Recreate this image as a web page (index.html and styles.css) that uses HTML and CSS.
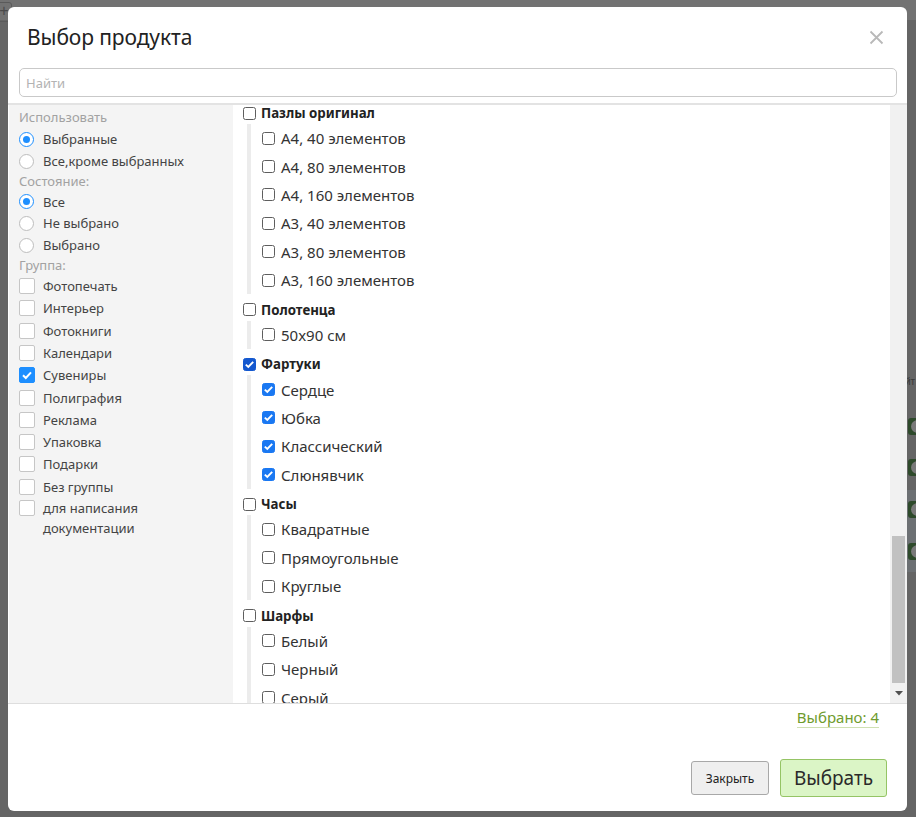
FILE: index.html
```html
<!DOCTYPE html>
<html lang="ru">
<head>
<meta charset="utf-8">
<title>Выбор продукта</title>
<link rel="stylesheet" href="styles.css">
</head>
<body>
<div class="backdrop">
  <div class="bg-top"></div>
  <div class="bg-plus">+</div>
  <div class="bg-band"></div>
  <div class="bg-pill p1"></div>
  <div class="bg-pill p2"></div>
  <div class="bg-pill p3"></div>
  <div class="bg-pill p4"></div>
  <div class="bg-txt">йт</div>
</div>

<div class="modal">
  <div class="modal-header">
    <h1 class="modal-title">Выбор продукта</h1>
    <span class="close">
      <svg width="15" height="15" viewBox="0 0 15 15"><path d="M1.5 1.5L13.5 13.5M13.5 1.5L1.5 13.5" stroke="#b9b9b9" stroke-width="1.8" fill="none"/></svg>
    </span>
  </div>
  <div class="search-wrap">
    <input class="search" type="text" placeholder="Найти">
  </div>

  <div class="modal-body">
    <div class="filters">
      <div class="f-head first">Использовать</div>
      <div class="f-item r"><span class="radio on"></span>Выбранные</div>
      <div class="f-item r"><span class="radio"></span>Все,кроме выбранных</div>
      <div class="f-head">Состояние:</div>
      <div class="f-item r"><span class="radio on"></span>Все</div>
      <div class="f-item r"><span class="radio"></span>Не выбрано</div>
      <div class="f-item r"><span class="radio"></span>Выбрано</div>
      <div class="f-head">Группа:</div>
      <div class="f-item"><span class="fcb"></span>Фотопечать</div>
      <div class="f-item"><span class="fcb"></span>Интерьер</div>
      <div class="f-item"><span class="fcb"></span>Фотокниги</div>
      <div class="f-item"><span class="fcb"></span>Календари</div>
      <div class="f-item"><span class="fcb on"><svg width="16" height="16" viewBox="0 0 16 16"><path d="M4 8.2L6.8 11L12 5.3" stroke="#fff" stroke-width="2" fill="none"/></svg></span>Сувениры</div>
      <div class="f-item"><span class="fcb"></span>Полиграфия</div>
      <div class="f-item"><span class="fcb"></span>Реклама</div>
      <div class="f-item"><span class="fcb"></span>Упаковка</div>
      <div class="f-item"><span class="fcb"></span>Подарки</div>
      <div class="f-item"><span class="fcb"></span>Без группы</div>
      <div class="f-item multi"><span class="fcb"></span><span>для написания<br>документации</span></div>
    </div>

    <div class="list">
      <div class="list-inner">
        <div class="grp"><span class="cb"></span>Пазлы оригинал</div>
        <div class="children">
          <div class="child"><span class="cb"></span>А4, 40 элементов</div>
          <div class="child"><span class="cb"></span>А4, 80 элементов</div>
          <div class="child"><span class="cb"></span>А4, 160 элементов</div>
          <div class="child"><span class="cb"></span>А3, 40 элементов</div>
          <div class="child"><span class="cb"></span>А3, 80 элементов</div>
          <div class="child"><span class="cb"></span>А3, 160 элементов</div>
        </div>
        <div class="grp"><span class="cb"></span>Полотенца</div>
        <div class="children">
          <div class="child"><span class="cb"></span>50x90 см</div>
        </div>
        <div class="grp"><span class="cb on dark"><svg width="13" height="13" viewBox="0 0 13 13"><path d="M2.8 6.6L5.3 9L10.2 3.8" stroke="#fff" stroke-width="1.9" fill="none"/></svg></span>Фартуки</div>
        <div class="children">
          <div class="child"><span class="cb on"><svg width="13" height="13" viewBox="0 0 13 13"><path d="M2.8 6.6L5.3 9L10.2 3.8" stroke="#fff" stroke-width="1.9" fill="none"/></svg></span>Сердце</div>
          <div class="child"><span class="cb on"><svg width="13" height="13" viewBox="0 0 13 13"><path d="M2.8 6.6L5.3 9L10.2 3.8" stroke="#fff" stroke-width="1.9" fill="none"/></svg></span>Юбка</div>
          <div class="child"><span class="cb on"><svg width="13" height="13" viewBox="0 0 13 13"><path d="M2.8 6.6L5.3 9L10.2 3.8" stroke="#fff" stroke-width="1.9" fill="none"/></svg></span>Классический</div>
          <div class="child"><span class="cb on"><svg width="13" height="13" viewBox="0 0 13 13"><path d="M2.8 6.6L5.3 9L10.2 3.8" stroke="#fff" stroke-width="1.9" fill="none"/></svg></span>Слюнявчик</div>
        </div>
        <div class="grp"><span class="cb"></span>Часы</div>
        <div class="children">
          <div class="child"><span class="cb"></span>Квадратные</div>
          <div class="child"><span class="cb"></span>Прямоугольные</div>
          <div class="child"><span class="cb"></span>Круглые</div>
        </div>
        <div class="grp"><span class="cb"></span>Шарфы</div>
        <div class="children">
          <div class="child"><span class="cb"></span>Белый</div>
          <div class="child"><span class="cb"></span>Черный</div>
          <div class="child"><span class="cb"></span>Серый</div>
        </div>
      </div>
    </div>

    <div class="scrollbar">
      <div class="sb-space"></div>
      <div class="sb-thumb"></div>
      <div class="sb-arrow">
        <svg width="8" height="5" viewBox="0 0 8 5"><path d="M0 0H8L4 4.5Z" fill="#505050"/></svg>
      </div>
    </div>
  </div>

  <div class="modal-footer">
    <div class="selected-row"><span class="selected">Выбрано: 4</span></div>
    <div class="buttons">
      <button class="btn btn-close">Закрыть</button>
      <button class="btn btn-ok">Выбрать</button>
    </div>
  </div>
</div>
</body>
</html>
```

FILE: styles.css
```css
html, body {
  margin: 0;
  padding: 0;
}
body {
  width: 916px;
  height: 817px;
  overflow: hidden;
  background: #656565;
  font-family: "Noto Sans", "Open Sans", sans-serif;
  position: relative;
}

/* dimmed page behind the modal */
.backdrop {
  position: absolute;
  inset: 0;
  z-index: 0;
}
.bg-top {
  position: absolute;
  left: 0; top: 0; right: 0;
  height: 20px;
  background: #727272;
}
.bg-plus {
  position: absolute;
  left: -4px; top: 2px;
  width: 14px; height: 18px;
  border: 1px solid #5a5a5a;
  border-radius: 3px;
  color: #4a4a4a;
  font: 16px/16px "Liberation Sans", sans-serif;
  text-align: center;
}
.bg-band {
  position: absolute;
  left: 907px; right: 0;
  top: 490px; height: 82px;
  background: #6c7073;
}
.bg-pill {
  position: absolute;
  left: 908px;
  width: 14px; height: 17px;
  background: #2e4a2b;
  border-radius: 3px;
}
.bg-pill::after {
  content: "";
  position: absolute;
  left: 3px; top: 2px;
  width: 13px; height: 13px;
  border-radius: 50%;
  background: #7a7a7a;
}
.p1 { top: 418px; }
.p2 { top: 459px; }
.p3 { top: 501px; }
.p4 { top: 543px; }
.bg-txt {
  position: absolute;
  left: 905px; top: 376px;
  font: 10px "Liberation Sans", sans-serif;
  color: #3a3a3a;
}

/* modal */
.modal {
  position: absolute;
  left: 8px; top: 7px;
  width: 899px;
  height: 804px;
  background: #fff;
  border-radius: 6px;
  z-index: 1;
  display: flex;
  flex-direction: column;
  overflow: hidden;
  color: #333;
}
.modal-header {
  height: 61px;
  display: flex;
  align-items: center;
  justify-content: space-between;
  padding: 0 23px 0 19px;
  flex: none;
}
.modal-title {
  margin: 0;
  font-weight: 400;
  font-size: 21px;
  color: #222;
  letter-spacing: -0.1px;
  position: relative;
  top: -1px;
}
.close {
  display: flex;
}
.search-wrap {
  padding: 0 10px 0 11px;
  flex: none;
}
.search {
  box-sizing: border-box;
  width: 100%;
  height: 29px;
  border: 1px solid #c9c9c9;
  border-radius: 5px;
  padding: 0 6px;
  font-family: inherit;
  font-size: 13px;
  color: #333;
  outline: none;
}
.search::placeholder {
  color: #b3b3b3;
}

.modal-body {
  margin-top: 6px;
  border-top: 2px solid #e3e3e3;
  height: 598px;
  display: flex;
  flex: none;
}

/* left filters */
.filters {
  width: 214px;
  flex: none;
  margin-left: 1px;
  background: #f4f4f4;
  padding: 2.5px 0 0 10px;
  font-size: 13px;
  color: #444;
}
.f-head {
  height: 19px;
  line-height: 19px;
  color: #a2a2a2;
}
.f-head.first {
  margin-bottom: 2px;
}
.f-item {
  height: 22.3px;
  display: flex;
  align-items: center;
  gap: 8px;
}
.f-item.r {
  height: 21.7px;
}
.f-item.multi {
  align-items: flex-start;
  line-height: 20px;
  height: auto;
}
.f-item.multi .fcb {
  margin-top: 2px;
}
.radio {
  box-sizing: border-box;
  width: 15px;
  height: 15px;
  border-radius: 50%;
  border: 1px solid #bdbdbd;
  background: #fff;
  flex: none;
  margin-right: 1px;
  position: relative;
}
.radio.on {
  border-color: #1e8fff;
}
.radio.on::after {
  content: "";
  position: absolute;
  left: 3px; top: 3px;
  width: 7px; height: 7px;
  border-radius: 50%;
  background: #1e8fff;
}
.fcb {
  box-sizing: border-box;
  width: 16px;
  height: 16px;
  border: 1px solid #c6c6c6;
  border-radius: 2px;
  background: #fff;
  flex: none;
  display: flex;
}
.fcb.on {
  background: #1e8fff;
  border-color: #1e8fff;
}
.fcb.on svg {
  margin: -1px;
}

/* product list */
.list {
  flex: 1;
  overflow: hidden;
  background: #fff;
}
.list-inner {
  margin-top: -3px;
  padding-left: 10px;
  font-size: 15px;
  color: #333;
}
.grp {
  height: 22px;
  display: flex;
  align-items: center;
  gap: 5px;
  font-weight: 700;
  font-size: 13.3px;
  color: #222;
}
.children {
  margin: 0 0 4.3px 4px;
  border-left: 4px solid #ececec;
  padding-left: 11px;
}
.child {
  height: 28.4px;
  display: flex;
  align-items: center;
  gap: 6px;
}
.cb {
  box-sizing: border-box;
  width: 13px;
  height: 13px;
  border: 1px solid #5e5e5e;
  border-radius: 2.5px;
  background: #fff;
  flex: none;
  display: flex;
}
.cb.on {
  background: #1a78f2;
  border-color: #1a78f2;
}
.cb.on.dark {
  background: #1458cf;
  border-color: #1458cf;
}
.cb.on svg {
  margin: -1px;
}

/* scrollbar */
.scrollbar {
  width: 17px;
  flex: none;
  background: #f1f1f1;
  display: flex;
  flex-direction: column;
  align-items: center;
}
.sb-space {
  height: 431px;
  flex: none;
}
.sb-thumb {
  width: 13px;
  height: 147px;
  background: #c1c1c1;
  flex: none;
}
.sb-arrow {
  flex: 1;
  display: flex;
  align-items: center;
  justify-content: center;
}

/* footer */
.modal-footer {
  border-top: 1px solid #dedede;
  flex: 1;
  display: flex;
  flex-direction: column;
  padding: 0 20px 14px 0;
}
.selected-row {
  display: flex;
  justify-content: flex-end;
  padding: 3px 8px 0 0;
}
.selected {
  font-size: 15px;
  color: #6f9b2d;
  line-height: 20px;
  border-bottom: 1px solid #cfe0b3;
}
.buttons {
  margin-top: auto;
  display: flex;
  justify-content: flex-end;
  align-items: center;
  gap: 11px;
}
.btn {
  font-family: inherit;
  color: #222;
  cursor: pointer;
}
.btn-close {
  width: 78px;
  height: 34px;
  background: #efefef;
  border: 1px solid #a8a8a8;
  border-radius: 3px;
  font-size: 12px;
  padding: 0;
}
.btn-ok {
  width: 107px;
  height: 38px;
  background: #dbf5c6;
  border: 1px solid #95c465;
  border-radius: 3px;
  font-size: 19px;
  padding: 0;
  color: #2a2a2a;
}
```
